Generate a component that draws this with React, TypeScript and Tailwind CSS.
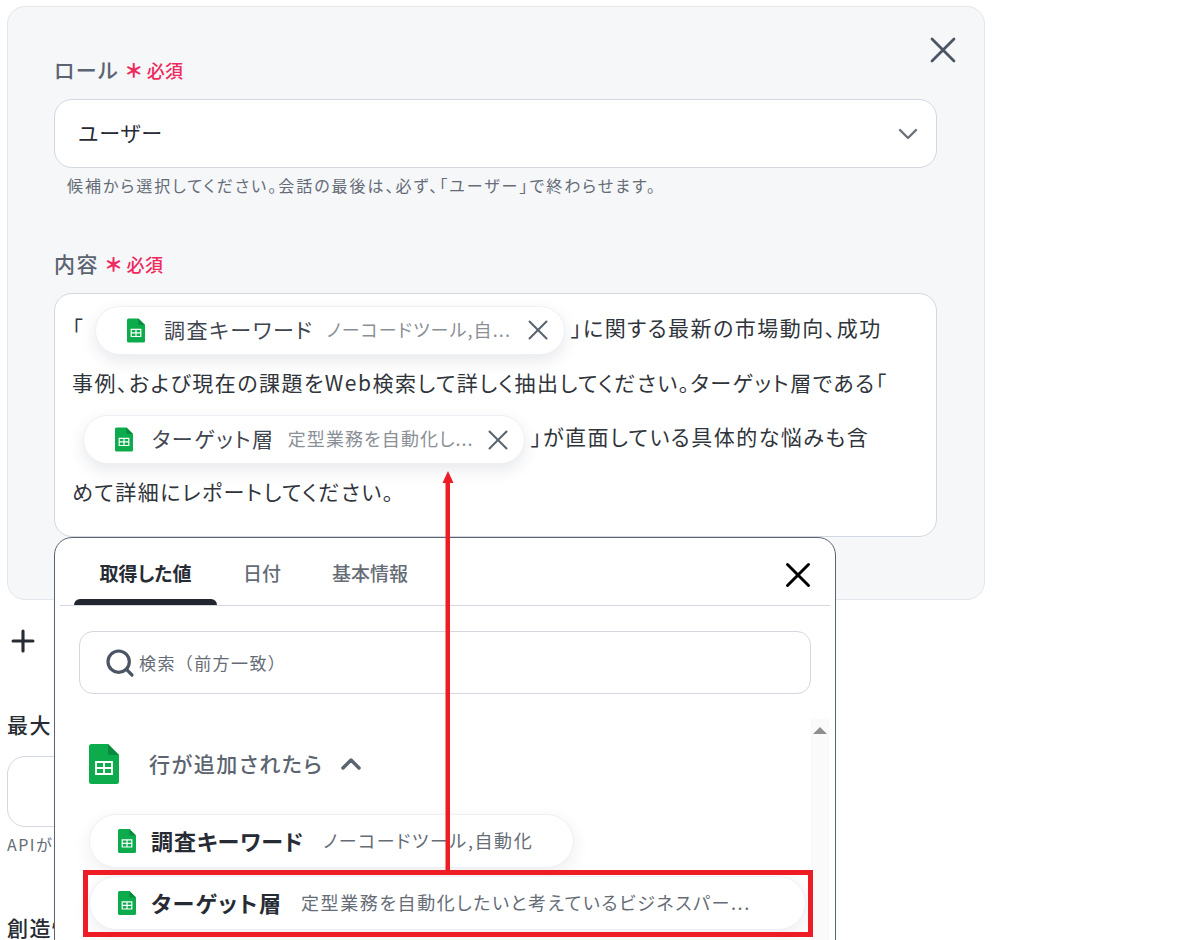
import { ChevronDown, ChevronUp, Plus, Search, X } from "lucide-react"

function SheetIcon({ className }: { className: string }) {
    return (
        <svg viewBox="0 0 30 40" className={className}>
            <path d="M2.5 0H19L30 11V37.5A2.5 2.5 0 0 1 27.5 40H2.5A2.5 2.5 0 0 1 0 37.5V2.5A2.5 2.5 0 0 1 2.5 0Z" fill="#0cab4c" />
            <path d="M19 0L30 11H21.5A2.5 2.5 0 0 1 19 8.5Z" fill="#0a8a3e" />
            <path d="M6 17H24V31H6ZM8 19V23H14V19ZM16 19V23H22V19ZM8 25V29H14V25ZM16 25V29H22V25Z" fill="#ffffff" fillRule="evenodd" />
        </svg>
    )
}

function RequiredMark() {
    return (
        <span className="inline-flex items-center text-[#ee2a5e] tracking-normal">
            <span className="ml-[7px] mr-[5px] text-[19px] font-black">＊</span>
            <span className="text-[18px] font-medium tracking-[0.5px]">必須</span>
        </span>
    )
}

function InlineChip({ width, label, value }: { width: string; label: string; value: string }) {
    return (
        <span className={`${width} inline-flex items-center h-[49px] ml-[11px] mr-[6px] pl-[31px] align-middle bg-white rounded-full border border-[#eef0f4] shadow-[0_6px_16px_rgba(30,40,70,0.10)] tracking-normal`}>
            <SheetIcon className="w-[18px] h-[25px] shrink-0" />
            <span className="ml-[19px] pb-[2px] text-[21px] tracking-[1.6px] text-[#3f4650] whitespace-nowrap">{label}</span>
            <span className="ml-[13px] pb-[2px] text-[18px] tracking-[1.1px] text-[#8a8f96] whitespace-nowrap flex-1">{value}</span>
            <X className="w-[34px] h-[34px] text-[#59626e] mr-[9px] shrink-0" strokeWidth={1.4} />
        </span>
    )
}

function ListChip({ width, label, value, labelWidth }: { width: string; label: string; value: string; labelWidth: string }) {
    return (
        <div className={`${width} flex items-center h-[54px] pl-[28px] bg-white rounded-full border border-[#eeeff5] shadow-[0_6px_18px_rgba(30,40,70,0.08)]`}>
            <SheetIcon className="w-[18px] h-[24px] shrink-0" />
            <span className={`${labelWidth} ml-[15px] pb-[2px] text-[22px] font-bold text-[#272b33] whitespace-nowrap`}>{label}</span>
            <span className="pb-[1px] text-[18px] tracking-[1.6px] text-[#656c76] whitespace-nowrap">{value}</span>
        </div>
    )
}

function ValuePicker() {
    return (
        <div className="absolute left-[54px] top-[537px] w-[782px] h-[420px] px-[5px] bg-white border border-[#5b6470] rounded-t-[18px]">
            <div className="relative flex items-center h-[68px] pt-[3px] border-b border-[#d3d7df]">
                <div className="flex justify-center items-center w-[143px] h-full ml-[14px] text-[19px] font-bold text-[#272b33]">
                    取得した値
                    <span className="absolute left-[14px] w-[143px] bottom-0 h-[6px] bg-[#22262e] rounded-t-[6px]" />
                </div>
                <span className="ml-[26px] text-[19px] font-medium text-[#656c76]">日付</span>
                <span className="ml-[51px] text-[19px] font-medium text-[#656c76]">基本情報</span>
                <X className="absolute right-[11px] top-[16px] w-[42px] h-[42px] text-black" strokeWidth={1.7} />
            </div>
            <div className="flex items-center h-[63px] mt-[25px] mx-[19px] pl-[24px] border border-[#d3d7df] rounded-[14px]">
                <Search className="w-[32px] h-[32px] text-[#4b5563]" strokeWidth={2.4} />
                <span className="ml-[3px] text-[17px] tracking-[1.4px] text-[#656c76] [font-feature-settings:normal]">検索（前方一致）</span>
            </div>
            <div className="relative h-[300px] mt-[25px] pl-[29px] pt-[25px]">
                <div className="absolute right-[1px] top-0 w-[18px] h-full bg-[#fafafa]">
                    <span className="absolute left-[2px] top-[8px] border-x-[7px] border-b-[7px] border-x-transparent border-b-[#8f8f8f]" />
                </div>
                <div className="flex items-center h-[40px]">
                    <SheetIcon className="w-[30px] h-[40px] shrink-0" />
                    <span className="ml-[30px] text-[21px] font-medium tracking-[1.6px] text-[#5b6470]">行が追加されたら</span>
                    <ChevronUp className="ml-[12px] w-[32px] h-[32px] text-[#5b6470]" strokeWidth={2.6} />
                </div>
                <div className="flex flex-col gap-[8px] mt-[30px]">
                    <ListChip width="w-[485px]" labelWidth="w-[172px] tracking-[0.9px]" label="調査キーワード" value="ノーコードツール,自動化" />
                    <ListChip width="w-[717px]" labelWidth="w-[150px] tracking-[1.7px]" label="ターゲット層" value="定型業務を自動化したいと考えているビジネスパー..." />
                </div>
            </div>
        </div>
    )
}

export default function App() {
    return (
        <div className="relative h-[940px] overflow-hidden bg-white pl-[7px] pt-[6px] text-[#272b33] [font-family:'Noto_Sans_CJK_JP','Noto_Sans',sans-serif] [font-feature-settings:'palt']">
            <div className="relative w-[978px] h-[594px] pl-[46px] pr-[47px] pt-[46px] bg-[#f5f7f9] border border-[#e3e6eb] rounded-[18px]">
                <X className="absolute right-[19px] top-[21px] w-[44px] h-[44px] text-[#4b5563]" strokeWidth={1.5} />
                <div className="flex items-center h-[36px] pb-[2px] text-[21px] font-medium tracking-[1.4px] text-[#5b6470]">
                    ロール
                    <RequiredMark />
                </div>
                <div className="flex items-center justify-between h-[69px] mt-[10px] pl-[23px] pr-[12px] bg-white border border-[#d3d7df] rounded-[18px]">
                    <span className="pb-[2px] text-[21px] tracking-[0.8px] text-[#272b33]">ユーザー</span>
                    <ChevronDown className="w-[32px] h-[32px] text-[#6b7078]" strokeWidth={1.8} />
                </div>
                <p className="mt-[5px] ml-[13px] text-[16px] leading-[24px] tracking-[2px] text-[#656c76]">候補から選択してください。会話の最後は、必ず、「ユーザー」で終わらせます。</p>
                <div className="flex items-center h-[36px] mt-[50px] pb-[2px] text-[21px] font-medium tracking-[1.4px] text-[#5b6470]">
                    内容
                    <RequiredMark />
                </div>
                <div className="h-[244px] mt-[10px] pl-[17px] pr-[46px] py-[6px] bg-white border border-[#d3d7df] rounded-[18px] text-[21px] leading-[54.4px] tracking-[1.5px] text-[#30343b]">
                    「<InlineChip width="w-[470px]" label="調査キーワード" value="ノーコードツール,自..." />」に関する最新の市場動向、成功事例、および現在の課題をWeb検索して詳しく抽出してください。ターゲット層である「<InlineChip width="w-[442px]" label="ターゲット層" value="定型業務を自動化し..." />」が直面している具体的な悩みも含めて詳細にレポートしてください。
                </div>
            </div>
            <Plus className="mt-[24px] ml-[-1px] w-[34px] h-[34px] text-[#272b33]" strokeWidth={2.2} />
            <p className="mt-[51px] text-[21px] font-medium leading-[30px] tracking-[1.4px]">最大</p>
            <div className="w-[200px] h-[71px] mt-[17px] bg-white border border-[#d3d7df] rounded-[18px]" />
            <p className="mt-[5px] text-[16px] leading-[24px] tracking-[1.5px] text-[#656c76]">APIが</p>
            <p className="mt-[56px] text-[21px] font-medium leading-[30px] tracking-[1.4px]">創造性</p>
            <ValuePicker />
            <svg className="absolute left-[442px] top-[470px] w-[12px] h-[402px]" viewBox="0 0 12 402">
                <path d="M6 1L11.5 13H8V402H3.5V13H0.5Z" fill="#ee1c25" />
            </svg>
            <div className="absolute left-[83px] top-[870px] w-[730px] h-[67px] border-[5px] border-[#ee1c25]" />
        </div>
    )
}
